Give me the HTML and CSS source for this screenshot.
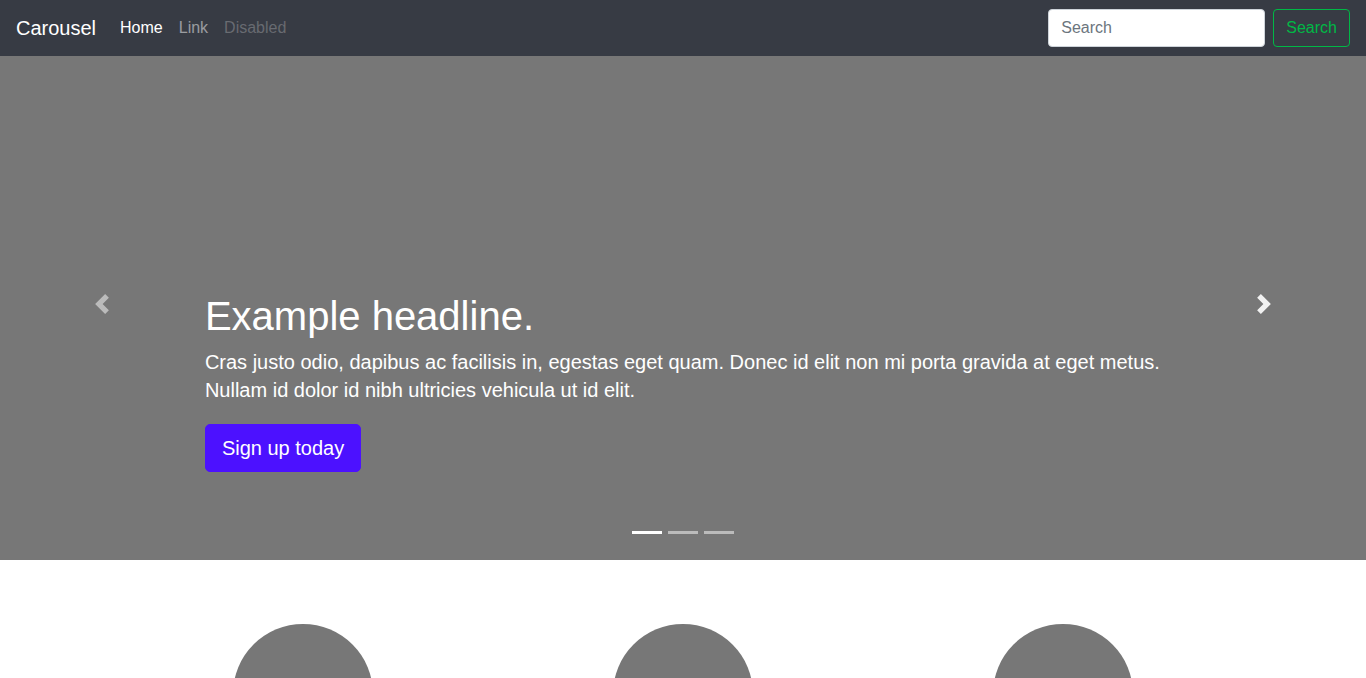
FILE: index.html
```html
<!DOCTYPE html>
<html lang="en">
<head>
<meta charset="utf-8">
<meta name="viewport" content="width=device-width, initial-scale=1">
<title>Carousel</title>
<link rel="stylesheet" href="styles.css">
</head>
<body>
<header>
  <nav class="navbar">
    <a class="brand" href="#">Carousel</a>
    <ul class="nav-list">
      <li><a class="nav-link active" href="#">Home</a></li>
      <li><a class="nav-link" href="#">Link</a></li>
      <li><a class="nav-link disabled" aria-disabled="true" href="#">Disabled</a></li>
    </ul>
    <form class="search-form">
      <input class="search-input" type="search" placeholder="Search" aria-label="Search">
      <button class="search-button" type="submit">Search</button>
    </form>
  </nav>
</header>
<main>
  <section class="carousel">
    <button class="control" type="button" aria-label="Previous">
      <svg width="20" height="20" viewBox="0 0 8 8" fill="#fff"><path d="M5.25 0l-4 4 4 4 1.5-1.5L4.25 4l2.5-2.5L5.25 0z"/></svg>
    </button>
    <div class="slide">
      <div class="caption">
        <h1>Example headline.</h1>
        <p>Cras justo odio, dapibus ac facilisis in, egestas eget quam. Donec id elit non mi porta gravida at eget metus. Nullam id dolor id nibh ultricies vehicula ut id elit.</p>
        <a class="signup" href="#">Sign up today</a>
      </div>
      <div class="indicators">
        <button class="indicator current" type="button" aria-label="Slide 1"></button>
        <button class="indicator" type="button" aria-label="Slide 2"></button>
        <button class="indicator" type="button" aria-label="Slide 3"></button>
      </div>
    </div>
    <button class="control hovered" type="button" aria-label="Next">
      <svg width="20" height="20" viewBox="0 0 8 8" fill="#fff"><path d="M2.75 0l-1.5 1.5L3.75 4l-2.5 2.5L2.75 8l4-4-4-4z"/></svg>
    </button>
  </section>
  <section class="features">
    <div class="feature"><div class="portrait"></div></div>
    <div class="feature"><div class="portrait"></div></div>
    <div class="feature"><div class="portrait"></div></div>
  </section>
</main>
</body>
</html>
```
FILE: styles.css
```css
*, *::before, *::after { box-sizing: border-box; }
body {
  margin: 0;
  background: #fff;
  font: 16px/24px "Liberation Sans", Arial, sans-serif;
}
a { text-decoration: none; }
button { font: inherit; cursor: pointer; }
.navbar {
  display: flex;
  align-items: center;
  min-height: 56px;
  padding: 8px 16px;
  background: #373b44;
}
.brand { margin-right: 16px; color: #fff; font-size: 20px; line-height: 30px; }
.nav-list {
  display: flex;
  flex: 1;
  margin: 0;
  padding: 0;
  list-style: none;
}
.nav-link { display: block; padding: 8px; color: rgba(255, 255, 255, 0.5); }
.nav-link.active { color: #fff; }
.nav-link.disabled { color: rgba(255, 255, 255, 0.25); pointer-events: none; }
.search-form { display: flex; gap: 8px; }
.search-input {
  width: 217px;
  height: 38px;
  padding: 6px 12px;
  border: 1px solid #ced4da;
  border-radius: 4px;
  background: #fff;
  color: #495057;
  font: inherit;
  appearance: none;
}
.search-input::placeholder { color: #6c757d; opacity: 1; }
.search-button {
  padding: 6px 12px;
  border: 1px solid #00b846;
  border-radius: 4px;
  background: transparent;
  color: #00b846;
}
.carousel { display: flex; min-height: 504px; background: #777; color: #fff; }
.control {
  display: flex;
  flex: 0 0 15%;
  align-items: center;
  justify-content: center;
  padding: 0 0 8px;
  border: 0;
  background: none;
  opacity: 0.5;
}
.control.hovered { opacity: 0.9; }
.slide {
  display: flex;
  flex: 1;
  flex-direction: column;
  justify-content: flex-end;
}
.caption { padding-bottom: 49px; }
.caption h1 { margin: 0 0 8px; font-size: 40px; font-weight: 400; line-height: 48px; }
.caption p { margin: 0 0 20px; font-size: 20px; line-height: 28px; }
.signup {
  display: inline-block;
  padding: 8px 16px;
  border: 1px solid #4c11ff;
  border-radius: 5px;
  background: #4c11ff;
  color: #fff;
  font-size: 20px;
  line-height: 30px;
}
.indicators { display: flex; justify-content: center; padding-bottom: 16px; }
.indicator {
  width: 30px;
  height: 23px;
  margin: 0 3px;
  padding: 0;
  border: solid transparent;
  border-width: 10px 0;
  background: #fff;
  background-clip: padding-box;
  opacity: 0.5;
}
.indicator.current { opacity: 1; }
.features {
  display: grid;
  grid-template-columns: repeat(3, 1fr);
  max-width: 1140px;
  margin: 64px auto 0;
}
.feature { display: flex; justify-content: center; }
.portrait { width: 140px; height: 140px; border-radius: 50%; background: #777; }
```
